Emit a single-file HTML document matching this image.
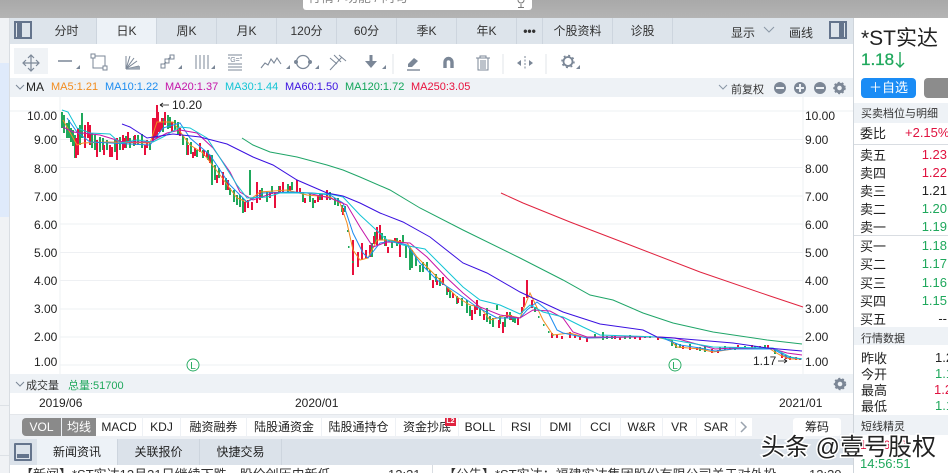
<!DOCTYPE html>
<html lang="zh"><head><meta charset="utf-8">
<style>
*{margin:0;padding:0;box-sizing:border-box}
html,body{width:948px;height:473px;overflow:hidden;background:#fff}
body{font-family:"Liberation Sans","Noto Sans CJK SC",sans-serif;color:#222;position:relative}
.a{position:absolute;white-space:nowrap}
.tab{position:absolute;top:18px;height:26px;line-height:27px;text-align:center;font-size:12px;color:#333;border-right:1px solid #cdd5de}
.ind{position:absolute;top:418px;height:18px;line-height:19px;background:#fff;text-align:center;font-size:12px;color:#222}
.r{position:absolute;left:860px;font-size:13px;color:#222;white-space:nowrap}
.v{position:absolute;font-size:13px;white-space:nowrap;right:1px}
.c{position:absolute;font-size:13px;white-space:nowrap;left:935px}
.t{position:absolute;left:861px;font-size:11px;color:#333;white-space:nowrap}
.g{color:#1fa85c}.d{color:#e0123f}
.ax{position:absolute;font-size:12px;color:#222}
</style></head><body>
<div class="a" style="left:0;top:0;width:948px;height:18px;background:linear-gradient(#a9a9a9,#b4b4b4)"></div>
<div class="a" style="left:303px;top:0;width:229px;height:10px;background:#fff;border-radius:0 0 3px 3px;overflow:hidden"><div class="a" style="left:5px;top:-10px;font-size:13px;line-height:15px;color:#888">行情 / 功能 / 问句</div><svg class="a" style="left:212px;top:0" width="12" height="9"><path d="M3 0a3 3 0 0 0 6 0M6 4v3M3 7.500h6" fill="none" stroke="#777"/></svg></div>
<div class="a" style="left:0;top:18px;width:10px;height:455px;background:#f0f2f5;border-right:1px solid #d9dde2"></div>
<div class="a" style="left:0;top:63px;width:9px;height:154px;background:#dfeafb"></div>
<div class="a" style="left:0;top:405px;width:9px;height:1px;background:#dde1e6"></div>
<div class="a" style="left:0;top:455px;width:9px;height:1px;background:#dde1e6"></div>
<div class="a" style="left:10px;top:18px;width:843px;height:26px;background:#dde4eb"></div>
<div class="a" style="left:853px;top:18px;width:1px;height:455px;background:#cfd5db"></div>
<div class="a" style="left:14px;top:21px;width:18px;height:18px;border:2px solid #64748c"><div style="width:5px;height:14px;background:#64748c;margin-left:1px"></div></div>
<div class="tab" style="left:37px;width:60px">分时</div>
<div class="tab" style="left:97px;width:60px;background:#edf2f7">日K</div>
<div class="tab" style="left:157px;width:60px">周K</div>
<div class="tab" style="left:217px;width:60px">月K</div>
<div class="tab" style="left:277px;width:60px">120分</div>
<div class="tab" style="left:337px;width:60px">60分</div>
<div class="tab" style="left:397px;width:60px">季K</div>
<div class="tab" style="left:457px;width:60px">年K</div>
<div class="tab" style="left:517px;width:26px;font-weight:bold;letter-spacing:0">•••</div>
<div class="tab" style="left:543px;width:70px">个股资料</div>
<div class="tab" style="left:613px;width:60px">诊股</div>
<div class="a" style="left:731px;top:24px;font-size:12px;color:#333">显示</div>
<svg class="a" style="left:763px;top:26px" width="12" height="8"><path d="M1 1l5 5 5-5" fill="none" stroke="#8a97a6"/></svg>
<div class="a" style="left:789px;top:24px;font-size:12px;color:#333">画线</div>
<div class="a" style="left:829px;top:21px;width:18px;height:18px;border:2px solid #64748c"><div style="width:5px;height:14px;background:#64748c;margin-left:8px"></div></div>

<!-- toolbar -->
<div class="a" style="left:14px;top:48px;width:34px;height:26px;background:#f0f3f6"></div>
<svg class="a" style="left:10px;top:44px" width="600" height="34" fill="none" stroke="#7b8797" stroke-width="1">
<path d="M21 12v14M14 19h14M18 14l3-3 3 3M18 24l3 3 3-3M16 16l-3 3 3 3M26 16l3 3-3 3" stroke-width="1.2"/>
<path d="M48 17h14" stroke-width="1.5"/><path d="M66 25h4v-4z" fill="#7b8797" stroke="none"/>
<rect x="83" y="12" width="12" height="12"/><rect x="81" y="10" width="4" height="4" fill="#fff"/><rect x="93" y="22" width="4" height="4" fill="#fff"/>
<path d="M116 25V12M116 25l4-13M116 25l8-11M116 25l11-8M116 25l13-3M116 25h14"/><path d="M116 25l14-3v3z" fill="#9aa5b2" stroke="none"/>
<rect x="151" y="20" width="4" height="4"/><rect x="155" y="15" width="4" height="4"/><rect x="160" y="11" width="4" height="4"/><path d="M154 20l2-2M158 15l3-2"/><path d="M168 25h4v-4z" fill="#7b8797" stroke="none"/>
<path d="M186 11v14M190 11v14M194 11v14M198 11v14"/><path d="M201 25h4v-4z" fill="#7b8797" stroke="none"/>
<path d="M218 11h14M218 23h14M218 26h14M218 14h2M230 14h2M218 20h14"/><text x="225" y="18" font-size="7" fill="#7b8797" stroke="none" text-anchor="middle" font-family="Liberation Sans">G=</text>
<path d="M251 24l4-5 3 2 3-6 3 4 3-5 4 6" stroke-width="1.1"/><path d="M276 25h4v-4z" fill="#7b8797" stroke="none"/>
<circle cx="293" cy="18" r="6.500" stroke-width="1.3"/><circle cx="286" cy="18" r="1.500" fill="#7b8797"/><circle cx="300" cy="18" r="1.500" fill="#7b8797"/><path d="M305 25h4v-4z" fill="#7b8797" stroke="none"/>
<path d="M320 26l12-13M320 14l7 6M324 11l7 7M329 11l7 6"/>
<path d="M361 11v7" stroke-width="3"/><path d="M355 17h12l-6 7z" fill="#7b8797" stroke="none"/><path d="M372 25h4v-4z" fill="#7b8797" stroke="none"/>
<path d="M383 10v20" stroke="#e2e6ea"/>
<path d="M398 20l6-6 4 3-6 6h-4z" fill="#7b8797" stroke="none"/><path d="M397 26h13" stroke-width="1.400"/>
<path d="M435 24v-6a3.500 3.500 0 0 1 7 0v6" stroke-width="3.400"/>
<path d="M466 14h14M470 14v-2h6v2M468 14v12h10V14M471 16v9M473 16v9M475 16v9" stroke-width="1"/>
<path d="M493 10v20M536 10v20" stroke="#e2e6ea"/>
<path d="M515 12v14" stroke-dasharray="2 1.500"/><path d="M511 16l-4 3 4 3zM519 16l4 3-4 3z" fill="#7b8797" stroke="none"/>
<circle cx="558" cy="17.500" r="4.500" stroke-width="1.800"/><circle cx="558" cy="17.500" r="6" stroke-width="1.500" stroke-dasharray="2 2.700"/><path d="M566 25h4v-4z" fill="#7b8797" stroke="none"/>
</svg>

<!-- MA bar -->
<div class="a" style="left:10px;top:78px;width:843px;height:19px;background:#eef2f6"></div>
<svg class="a" style="left:15px;top:84px" width="10" height="7"><path d="M1 1l4 4 4-4" fill="none" stroke="#7b8797"/></svg>
<div class="a" style="left:26px;top:80px;font-size:12px;color:#222">MA</div>
<div class="a" style="left:51px;top:81px;font-size:11px;color:#f28c1e">MA5:1.21</div>
<div class="a" style="left:105px;top:81px;font-size:11px;color:#1c8cf0">MA10:1.22</div>
<div class="a" style="left:165px;top:81px;font-size:11px;color:#c414a8">MA20:1.37</div>
<div class="a" style="left:225px;top:81px;font-size:11px;color:#12c4d4">MA30:1.44</div>
<div class="a" style="left:285px;top:81px;font-size:11px;color:#3a10e0">MA60:1.50</div>
<div class="a" style="left:345px;top:81px;font-size:11px;color:#12a55a">MA120:1.72</div>
<div class="a" style="left:411px;top:81px;font-size:11px;color:#e8103c">MA250:3.05</div>
<svg class="a" style="left:718px;top:84px" width="10" height="7"><path d="M1 1l4 4 4-4" fill="none" stroke="#8a97a6"/></svg>
<div class="a" style="left:731px;top:81px;font-size:11px;color:#333">前复权</div>
<svg class="a" style="left:772px;top:80px" width="76" height="16"><g fill="#7c8796"><circle cx="8" cy="8" r="6"/><circle cx="28" cy="8" r="6"/><circle cx="48" cy="8" r="6"/></g><path d="M4 8h8M24 8h8M28 4v8M44 8h8" stroke="#eef2f6" stroke-width="2"/><circle cx="67.500" cy="8" r="3.800" fill="none" stroke="#7c8796" stroke-width="3"/><circle cx="67.500" cy="8" r="5.500" fill="none" stroke="#7c8796" stroke-width="1.500" stroke-dasharray="2 2"/></svg>

<!-- chart -->
<svg class="a" style="left:10px;top:97px" width="843" height="277" viewBox="10 97 843 277" fill="none">
<g stroke="#eef0f3"><path d="M60 97v277M803 97v277"/><path d="M10 111h843M60 139.500h743M60 167.500h743M60 196h743M60 224h743M60 252.500h743M60 280.500h743M60 309h743M60 337h743M60 365h743"/></g>
<path stroke="#1fa85c" stroke-width="2" d="M62 112v16M64 115v18M67 123v15M71 128v14M75 135v23M82 113v25M92 133v15M100 137v15M107 140v10M120 137v13M130 138v10M138 135v10M150 143v7M163 118v14M170 117v11M175 120v10M183 135v10M187 138v17M197 150v7M212 155v30M219 168v10M230 188v7M237 195v10M243 198v15M250 170v25M267 192v10M303 192v10M313 198v10M335 198v7M342 205v7M372 243v14M382 233v7M403 235v8M410 248v22M412 250v18M420 265v7M427 262v8M430 270v10M447 287v8M467 300v13M487 308v14M493 318v9M497 305v5M505 317v10M515 318v5M535 308v4M603 332v8M612 336v3M630 335v4M650 336v2M672 340v6M676 343v5M690 344v6M705 346v6M725 346v4M745 346v3M765 345v4M775 350v4M69 120v18M73 130v16M80 125v20M95 135v15M103 138v12M115 140v12M126 136v12M134 136v10M142 134v14M168 115v14M178 122v12M191 142v12M203 150v8M208 150v10M215 165v15M226 178v12M234 190v12M240 195v12M262 188v10M272 186v8M279 186v6M288 184v8M292 182v8M310 194v8M320 194v6M330 192v8M338 198v8M345 206v6M375 232v12M385 236v10M392 240v8M397 238v8M406 246v12M416 256v10M423 262v10M436 274v8M440 278v8M450 290v8M457 296v8M462 298v8M470 306v10M480 308v8M490 316v8M500 316v8M510 312v8M513 316v6M595 334v4M607 336v3M625 336v3M645 336v2M665 337v2M680 344v4M700 347v4M720 347v3M735 347v3M755 346v3"/>
<path stroke="#e8103c" stroke-width="2" d="M76 138v20M78 128v27M85 125v23M88 122v16M97 140v17M112 147v10M117 138v22M123 135v15M128 132v10M145 145v10M153 118v24M155 118v20M157 105v33M160 122v10M165 112v13M188 145v10M193 152v6M200 143v9M207 152v5M217 175v8M223 172v13M245 202v10M252 202v8M257 182v21M275 192v16M283 182v11M297 180v12M305 198v5M315 200v3M327 190v10M343 208v7M353 240v35M358 252v15M362 243v17M370 245v12M377 227v18M380 225v15M388 247v6M400 240v17M433 280v8M443 277v8M453 293v5M472 310v10M477 300v10M503 322v11M507 312v6M518 318v7M522 307v6M524 297v10M527 280v18M552 333v5M557 335v3M570 332v6M587 338v4M620 337v3M640 337v3M658 337v3M683 346v3M697 347v3M712 349v4M738 345v4M752 345v3M768 345v4M782 353v5M790 356v4M796 357v3M90 125v20M104 145v10M110 145v12M125 138v10M135 135v10M147 140v8M158 112v20M162 118v12M172 122v10M180 128v8M195 148v8M204 150v6M210 155v8M228 180v10M248 200v8M260 190v10M270 192v6M280 186v6M290 186v5M300 188v4M318 196v6M322 194v6M366 250v8M374 236v8M386 240v6M395 238v5M437 280v5M448 288v4M458 298v5M475 306v8M484 314v6M499 320v8M511 315v5M532 300v8M562 336v3M575 335v3M580 337v3M615 336v3M635 337v2M690 347v3M718 350v3M730 347v3M760 346v3M786 355v4M800 358v2"/>
<path stroke="#1fa85c" stroke-width="2" d="M347 231h1.500M348 247h1.500M352 262h1.500M535 308h1.500M538 317h1.500M543 325h1.500M548 332h1.500M552 335h1.500"/>
<path stroke="#f28c1e" d="M63 120L77 145 83 143 107 142 150 143 157 122 173 122 190 145 203 153 220 175 237 198 247 202 260 192 287 190 307 195 330 197 340 203 347 223 353 250 360 260 368 258 377 240 390 240 407 243 417 257 430 270 443 283 457 297 470 305 480 307 490 320 507 315 520 318 530 293 543 320 553 335 570 333 587 338 630 337 655 337 670 340 677 347 700 349 713 352 733 349 770 349 780 355 790 359 802 359"/>
<path stroke="#1c8cf0" d="M67 118L77 132 90 142 150 145 163 128 180 123 190 138 210 155 230 185 247 202 263 193 290 192 313 193 330 195 343 203 353 233 363 253 368 258 380 243 392 241 407 245 420 263 437 280 457 293 477 307 497 318 520 318 527 310 537 302 547 310 557 330 563 333 587 338 630 337 660 337 680 345 700 348 715 351 733 349 773 349 787 357 802 359"/>
<path stroke="#c414a8" d="M63 127L73 132 100 135 123 142 150 142 167 133 180 130 197 133 213 148 230 172 240 192 253 200 273 193 307 193 330 198 347 205 360 227 373 247 387 242 410 243 427 257 447 278 463 293 480 307 500 315 520 318 533 310 550 311 563 318 573 332 587 337 630 337 660 337 675 338 700 345 715 349 733 348 770 348 787 353 802 355"/>
<path stroke="#12c4d4" d="M62 110L68 112 77 128 90 133 110 134 120 143 137 140 153 142 163 137 180 127 190 128 207 138 220 158 237 185 247 198 267 197 280 193 307 193 330 194 343 197 360 215 373 227 387 240 403 245 425 249 443 267 463 287 480 300 500 305 520 314 530 305 543 312 563 317 583 327 600 335 630 336 657 337 667 339 713 347 773 348 790 357 802 359"/>
<path stroke="#3a10e0" d="M122 124L130 127 147 138 173 134 200 137 227 144 253 157 273 165 297 180 327 193 343 196 360 203 380 213 403 222 430 237 463 263 487 273 520 292 537 300 563 312 600 324 643 330 657 337 673 338 733 343 767 348 802 351"/>
<path stroke="#1fa568" d="M242 138L253 145 270 152 297 157 327 165 343 170 360 177 390 190 420 208 463 230 520 258 563 280 590 295 613 300 643 313 673 323 713 332 767 340 802 344"/>
<path stroke="#e0233f" d="M501 193L523 203 570 222 630 245 700 272 770 296 803 307"/>
<path stroke="#1a1a1a" d="M160 105h9M160 105l3-2M160 105l3 2M778 361h9M787 361l-3-2M787 361l-3 2" stroke-width=".8"/>
<circle cx="193" cy="365" r="6" stroke="#1fa85c" stroke-width=".9"/><circle cx="675" cy="365" r="6" stroke="#1fa85c" stroke-width=".9"/>
<text x="193" y="369" font-size="10" fill="#1fa85c" text-anchor="middle" font-family="Liberation Sans">L</text>
<text x="675" y="369" font-size="10" fill="#1fa85c" text-anchor="middle" font-family="Liberation Sans">L</text>
</svg>
<div class="ax" style="left:172px;top:98px">10.20</div>
<div class="ax" style="left:753px;top:354px">1.17</div>
<div class="ax" style="left:27px;top:109px">10.00</div><div class="ax" style="left:805px;top:109px">10.00</div>
<div class="ax" style="left:34px;top:133px">9.00</div><div class="ax" style="left:805px;top:133px">9.00</div>
<div class="ax" style="left:34px;top:162px">8.00</div><div class="ax" style="left:805px;top:162px">8.00</div>
<div class="ax" style="left:34px;top:190px">7.00</div><div class="ax" style="left:805px;top:190px">7.00</div>
<div class="ax" style="left:34px;top:218px">6.00</div><div class="ax" style="left:805px;top:218px">6.00</div>
<div class="ax" style="left:34px;top:246px">5.00</div><div class="ax" style="left:805px;top:246px">5.00</div>
<div class="ax" style="left:34px;top:274px">4.00</div><div class="ax" style="left:805px;top:274px">4.00</div>
<div class="ax" style="left:34px;top:302px">3.00</div><div class="ax" style="left:805px;top:302px">3.00</div>
<div class="ax" style="left:34px;top:330px">2.00</div><div class="ax" style="left:805px;top:330px">2.00</div>
<div class="ax" style="left:34px;top:355px">1.00</div><div class="ax" style="left:805px;top:355px">1.00</div>

<!-- volume bar -->
<div class="a" style="left:10px;top:374px;width:843px;height:19px;background:#eef2f6"></div>
<svg class="a" style="left:15px;top:381px" width="10" height="7"><path d="M1 1l4 4 4-4" fill="none" stroke="#7b8797"/></svg>
<div class="a" style="left:26px;top:377px;font-size:11px;color:#333">成交量</div>
<div class="a" style="left:68px;top:377px;font-size:11px;color:#1fa85c">总量:51700</div>
<svg class="a" style="left:832px;top:376px" width="16" height="16"><circle cx="8" cy="8" r="3.800" fill="none" stroke="#7c8796" stroke-width="3"/><circle cx="8" cy="8" r="5.500" fill="none" stroke="#7c8796" stroke-width="1.500" stroke-dasharray="2 2"/></svg>
<div class="a" style="left:39px;top:396px;font-size:12px;color:#222">2019/06</div>
<div class="a" style="left:295px;top:396px;font-size:12px;color:#222">2020/01</div>
<div class="a" style="left:779px;top:396px;font-size:12px;color:#222">2021/01</div>

<!-- indicators -->
<div class="a" style="left:10px;top:414px;width:843px;height:25px;background:#eef1f5;border-top:1px solid #e4e7eb"></div>
<div class="a" style="left:22px;top:418px;width:39px;height:18px;line-height:19px;background:#8a8a8a;color:#fff;text-align:center;font-size:12px;border-radius:4px 0 0 4px">VOL</div>
<div class="a" style="left:62px;top:418px;width:34px;height:18px;line-height:19px;background:#8a8a8a;color:#fff;text-align:center;font-size:12px">均线</div>
<div class="ind" style="left:96px;width:46px">MACD</div>
<div class="ind" style="left:143px;width:37px">KDJ</div>
<div class="ind" style="left:181px;width:65px">融资融券</div>
<div class="ind" style="left:247px;width:74px">陆股通资金</div>
<div class="ind" style="left:322px;width:73px">陆股通持仓</div>
<div class="ind" style="left:396px;width:62px">资金抄底</div>
<div class="a" style="left:445px;top:418px;width:11px;height:8px;background:#e0233f;color:#fff;font-size:7px;line-height:8px;text-align:center;font-weight:bold">L2</div>
<div class="ind" style="left:459px;width:42px">BOLL</div>
<div class="ind" style="left:502px;width:38px">RSI</div>
<div class="ind" style="left:541px;width:39px">DMI</div>
<div class="ind" style="left:581px;width:39px">CCI</div>
<div class="ind" style="left:621px;width:41px">W&amp;R</div>
<div class="ind" style="left:663px;width:33px">VR</div>
<div class="ind" style="left:697px;width:38px">SAR</div>
<div class="ind" style="left:736px;width:16px;color:#99a"><svg width="8" height="12" style="margin-top:3px"><path d="M1 1l5 5-5 5" fill="none" stroke="#9aa3ae" stroke-width="1.500"/></svg></div>
<div class="ind" style="left:793px;width:48px;border-radius:3px">筹码</div>

<!-- news tabs -->
<div class="a" style="left:10px;top:439px;width:843px;height:26px;background:#dbe2ea"></div>
<div class="a" style="left:14px;top:443px;width:18px;height:18px;border:2px solid #64748c;border-radius:1px"><div style="width:12px;height:4px;background:#64748c;margin:9px 0 0 1px"></div></div>
<div class="a" style="left:37px;top:439px;width:81px;height:26px;line-height:27px;background:#edf2f7;text-align:center;font-size:12px;border-right:1px solid #cdd5de">新闻资讯</div>
<div class="a" style="left:118px;top:439px;width:82px;height:26px;line-height:27px;text-align:center;font-size:12px;border-right:1px solid #cdd5de">关联报价</div>
<div class="a" style="left:200px;top:439px;width:82px;height:26px;line-height:27px;text-align:center;font-size:12px;border-right:1px solid #cdd5de">快捷交易</div>
<div class="a" style="left:20px;top:465px;height:8px;width:405px;overflow:hidden;font-size:13px;line-height:20px;color:#333">【新闻】*ST实达12月31日继续下跌，股价创历史新低<span style="position:absolute;left:368px">12:31</span></div>
<div class="a" style="left:432px;top:465px;width:1px;height:8px;background:#d9dde2"></div>
<div class="a" style="left:443px;top:465px;height:8px;width:405px;overflow:hidden;font-size:13px;line-height:20px;color:#333">【公告】*ST实达：福建实达集团股份有限公司关于对外投<span style="position:absolute;left:366px">12:30</span></div>

<!-- right panel -->
<div class="r" style="top:22px;left:861px;font-size:21px;color:#222">*ST实达</div>
<div class="r" style="top:50px;left:861px;font-size:17px;color:#1fa85c;-webkit-text-stroke:.3px #1fa85c">1.18</div>
<svg class="a" style="left:894px;top:51px" width="12" height="18"><path d="M6 1v15M2 12l4 4 4-4" fill="none" stroke="#1fa85c" stroke-width="1.400"/></svg>
<div class="a" style="left:861px;top:78px;width:55px;height:20px;background:#1a8cf5;border-radius:4px;color:#fff;font-size:13px;line-height:20px;text-align:center">＋自选</div>
<div class="a" style="left:924px;top:78px;width:24px;height:20px;background:#8c8c8c;border-radius:4px 0 0 4px"></div>
<div class="a" style="left:854px;top:103px;width:94px;height:20px;background:#eef2f6"></div>
<div class="t" style="top:105px">买卖档位与明细</div>
<div class="r" style="top:123px">委比</div><div class="v d" style="left:905px;right:auto;top:125px">+2.15%</div>
<div class="a" style="left:854px;top:144px;width:94px;height:1px;background:#d9dde2"></div>
<div class="r" style="top:145px">卖五</div><div class="v d" style="top:147px">1.23</div>
<div class="r" style="top:163px">卖四</div><div class="v d" style="top:165px">1.22</div>
<div class="r" style="top:181px">卖三</div><div class="v" style="top:183px">1.21</div>
<div class="r" style="top:199px">卖二</div><div class="v g" style="top:201px">1.20</div>
<div class="r" style="top:217px">卖一</div><div class="v g" style="top:219px">1.19</div>
<div class="a" style="left:854px;top:235px;width:94px;height:1px;background:#d9dde2"></div>
<div class="r" style="top:236px">买一</div><div class="v g" style="top:238px">1.18</div>
<div class="r" style="top:254px">买二</div><div class="v g" style="top:256px">1.17</div>
<div class="r" style="top:273px">买三</div><div class="v g" style="top:275px">1.16</div>
<div class="r" style="top:291px">买四</div><div class="v g" style="top:293px">1.15</div>
<div class="r" style="top:309px">买五</div><div class="v" style="top:311px">--</div>
<div class="a" style="left:854px;top:327px;width:94px;height:18px;background:#eef2f6"></div>
<div class="t" style="top:330px">行情数据</div>
<div class="r" style="top:348px;left:861px">昨收</div><div class="c" style="top:350px">1.2</div>
<div class="r" style="top:364px;left:861px">今开</div><div class="c g" style="top:366px">1.1</div>
<div class="r" style="top:380px;left:861px">最高</div><div class="c d" style="top:382px;left:934px">1.2</div>
<div class="r" style="top:396px;left:861px">最低</div><div class="c g" style="top:398px">1.1</div>
<div class="a" style="left:854px;top:415px;width:94px;height:20px;background:#eef2f6"></div>
<div class="t" style="top:418px">短线精灵</div>
<div class="r" style="top:456px;font-size:13px;color:#1fa85c">14:56:51</div>
<div class="r" style="top:438px;font-size:12px;color:#e0123f">14:56:48</div>
<!-- watermark -->
<div class="a" style="left:761px;top:427px;font-size:24px;color:#fff;-webkit-text-stroke:3px #fff">头条 @壹号股权</div>
<div class="a" style="left:761px;top:427px;font-size:24px;color:#222">头条 @壹号股权</div>
</body></html>
